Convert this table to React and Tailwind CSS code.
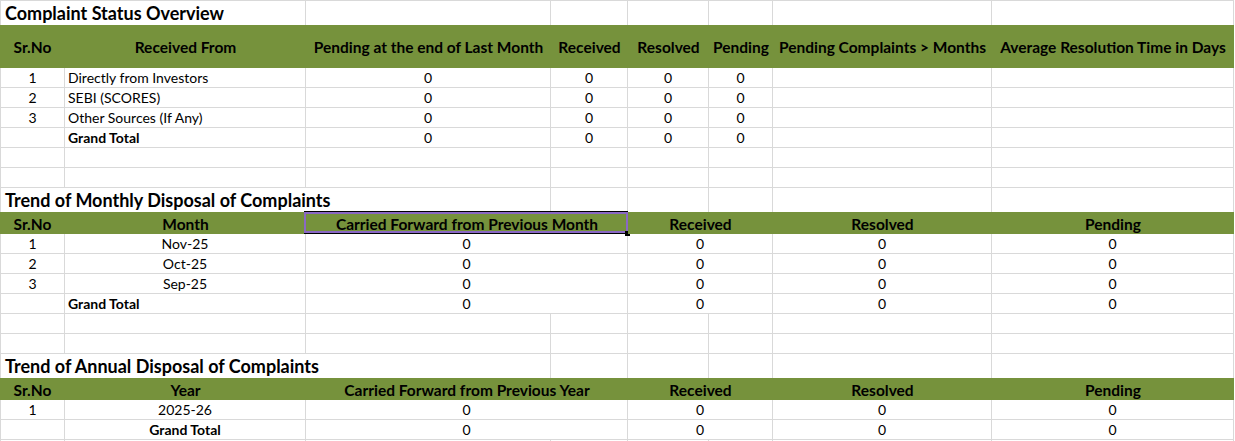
import React from "react";

const SPAN = { 1: "", 2: "col-span-2", 3: "col-span-3" };
const ALIGN = { c: "justify-center text-center", l: "justify-start pl-[3px]" };

function DataCell({ span = 1, first = false, align = "c", bold = false, h = "h-[20px]", children }) {
  return (
    <div
      className={`${SPAN[span]} ${h} flex items-end pb-[1px] overflow-visible whitespace-nowrap border-r border-b border-[#d9d9d9] ${
        first ? "border-l" : ""
      } ${ALIGN[align]} ${bold ? "font-bold" : ""} text-[14px] leading-[17px] text-black`}
    >
      {children}
    </div>
  );
}

function HeadCell({ span = 1, h, children, extra }) {
  return (
    <div
      className={`${SPAN[span]} ${h} relative flex items-center justify-center whitespace-nowrap bg-[#76923c] font-bold text-[15.5px] leading-[18px] text-black pt-[1px]`}
    >
      {children}
      {extra}
    </div>
  );
}

function TitleRow({ span, text, top = false }) {
  const rest = 8 - span;
  return (
    <>
      <div
        className={`${SPAN[span]} h-[24px] ${top ? "h-[25px] border-t" : ""} flex items-end pb-[1px] pl-[4px] whitespace-nowrap border-l border-r border-[#d9d9d9] font-bold text-[18px] leading-[22px] text-black`}
      >
        {text}
      </div>
      {Array.from({ length: rest }).map((_, i) => (
        <div
          key={i}
          className={`${top ? "h-[25px] border-t" : "h-[24px]"} border-r border-[#d9d9d9]`}
        />
      ))}
    </>
  );
}

function EmptyRow() {
  return (
    <>
      {Array.from({ length: 8 }).map((_, i) => (
        <DataCell key={i} first={i === 0} />
      ))}
    </>
  );
}

const Selection = (
  <div className="absolute left-[-2px] right-0 top-[-1px] bottom-0 border-t border-b border-black">
    <div className="absolute inset-0 shadow-[inset_0_0_0_2px_#8a68c4]" />
    <div className="absolute right-[-2px] bottom-[-3px] w-[5px] h-[5px] bg-black" />
  </div>
);

export default function App() {
  const s1 = [
    ["1", "Directly from Investors"],
    ["2", "SEBI (SCORES)"],
    ["3", "Other Sources (If Any)"],
  ];
  const s2 = [
    ["1", "Nov-25"],
    ["2", "Oct-25"],
    ["3", "Sep-25"],
  ];
  return (
    <div className="w-[1235px] h-[441px] overflow-hidden bg-white font-['Lato',sans-serif]">
      <div className="grid grid-cols-[65px_241px_245px_77px_81px_64px_219px_242px]">
        {/* Section 1 */}
        <TitleRow span={2} text="Complaint Status Overview" top />
        <HeadCell h="h-[43px]">Sr.No</HeadCell>
        <HeadCell h="h-[43px]">Received From</HeadCell>
        <HeadCell h="h-[43px]">Pending at the end of Last Month</HeadCell>
        <HeadCell h="h-[43px]">Received</HeadCell>
        <HeadCell h="h-[43px]">Resolved</HeadCell>
        <HeadCell h="h-[43px]">Pending</HeadCell>
        <HeadCell h="h-[43px]">Pending Complaints &gt; Months</HeadCell>
        <HeadCell h="h-[43px]">Average Resolution Time in Days</HeadCell>
        {s1.map(([n, t]) => (
          <React.Fragment key={n}>
            <DataCell first>{n}</DataCell>
            <DataCell align="l">{t}</DataCell>
            <DataCell>0</DataCell>
            <DataCell>0</DataCell>
            <DataCell>0</DataCell>
            <DataCell>0</DataCell>
            <DataCell />
            <DataCell />
          </React.Fragment>
        ))}
        <DataCell first />
        <DataCell align="l" bold>Grand Total</DataCell>
        <DataCell>0</DataCell>
        <DataCell>0</DataCell>
        <DataCell>0</DataCell>
        <DataCell>0</DataCell>
        <DataCell />
        <DataCell />
        <EmptyRow />
        <EmptyRow />

        {/* Section 2 */}
        <TitleRow span={3} text="Trend of Monthly Disposal of Complaints" />
        <HeadCell h="h-[22px]">Sr.No</HeadCell>
        <HeadCell h="h-[22px]">Month</HeadCell>
        <HeadCell h="h-[22px]" span={2} extra={Selection}>
          <span className="relative z-10">Carried Forward from Previous Month</span>
        </HeadCell>
        <HeadCell h="h-[22px]" span={2}>Received</HeadCell>
        <HeadCell h="h-[22px]">Resolved</HeadCell>
        <HeadCell h="h-[22px]">Pending</HeadCell>
        {s2.map(([n, t]) => (
          <React.Fragment key={n}>
            <DataCell first>{n}</DataCell>
            <DataCell>{t}</DataCell>
            <DataCell span={2}>0</DataCell>
            <DataCell span={2}>0</DataCell>
            <DataCell>0</DataCell>
            <DataCell>0</DataCell>
          </React.Fragment>
        ))}
        <DataCell first />
        <DataCell align="l" bold>Grand Total</DataCell>
        <DataCell span={2}>0</DataCell>
        <DataCell span={2}>0</DataCell>
        <DataCell>0</DataCell>
        <DataCell>0</DataCell>
        <EmptyRow />
        <EmptyRow />

        {/* Section 3 */}
        <TitleRow span={3} text="Trend of Annual Disposal of Complaints" />
        <HeadCell h="h-[22px]">Sr.No</HeadCell>
        <HeadCell h="h-[22px]">Year</HeadCell>
        <HeadCell h="h-[22px]" span={2}>Carried Forward from Previous Year</HeadCell>
        <HeadCell h="h-[22px]" span={2}>Received</HeadCell>
        <HeadCell h="h-[22px]">Resolved</HeadCell>
        <HeadCell h="h-[22px]">Pending</HeadCell>
        <DataCell first>1</DataCell>
        <DataCell>2025-26</DataCell>
        <DataCell span={2}>0</DataCell>
        <DataCell span={2}>0</DataCell>
        <DataCell>0</DataCell>
        <DataCell>0</DataCell>
        <DataCell first />
        <DataCell bold>Grand Total</DataCell>
        <DataCell span={2}>0</DataCell>
        <DataCell span={2}>0</DataCell>
        <DataCell>0</DataCell>
        <DataCell>0</DataCell>
        <EmptyRow />
      </div>
    </div>
  );
}
